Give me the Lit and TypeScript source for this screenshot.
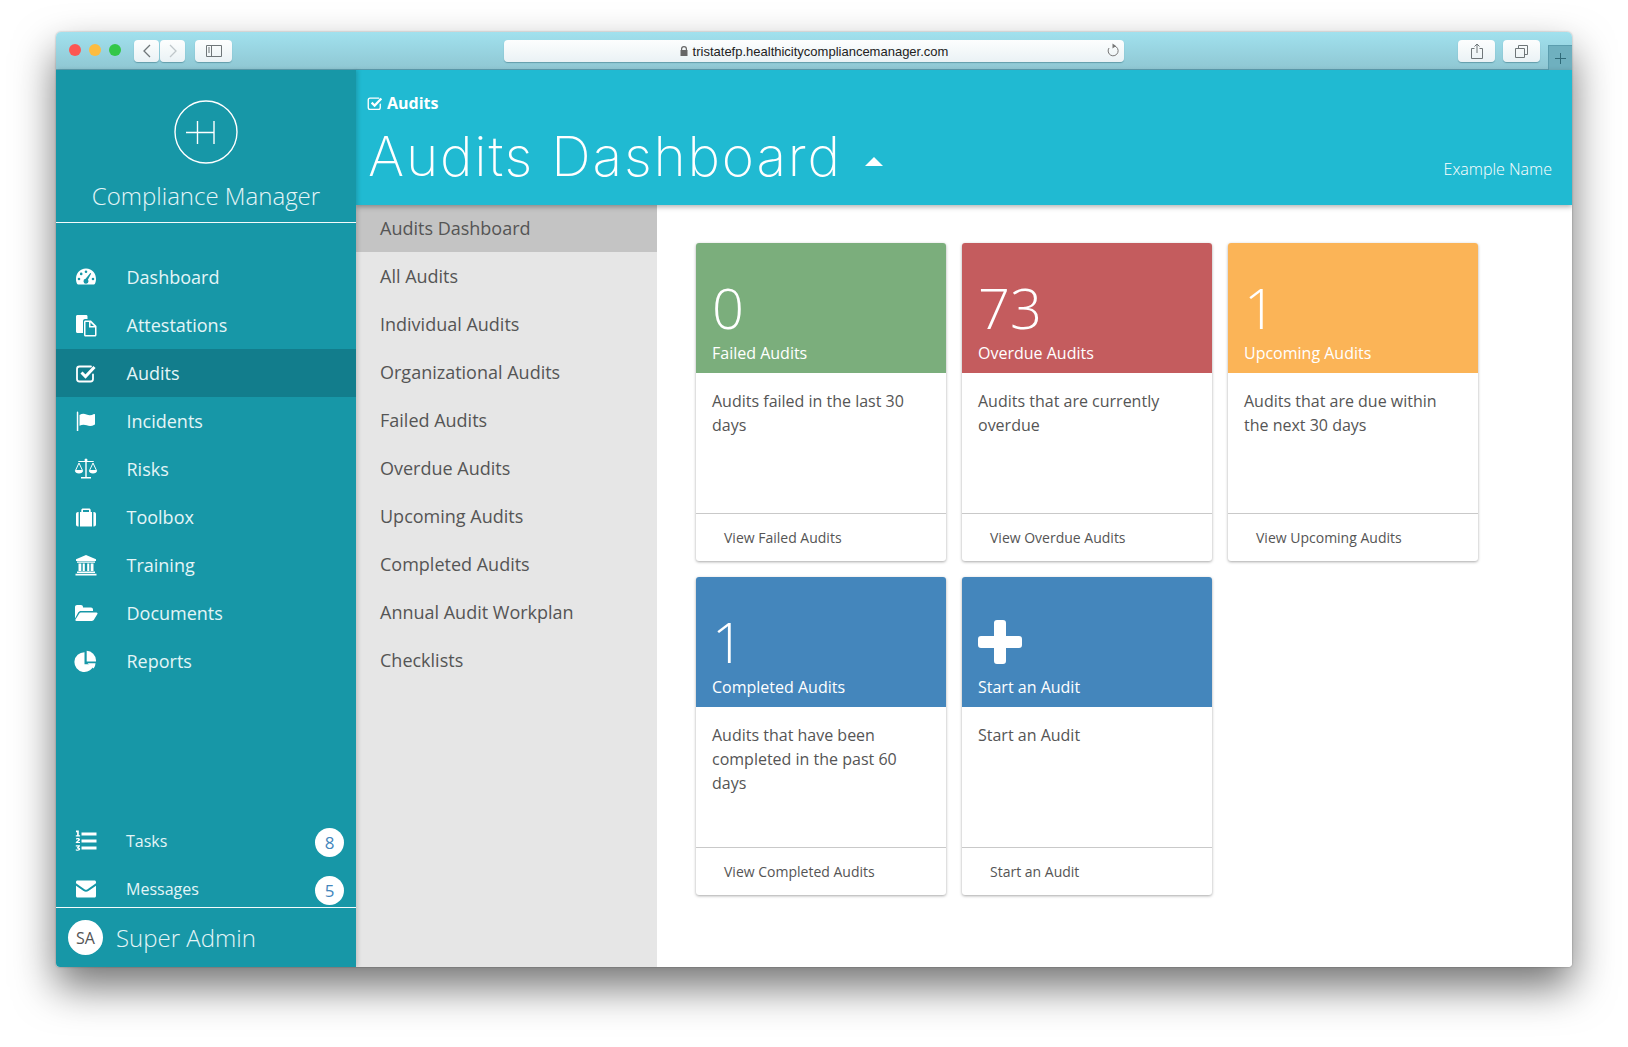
import { LitElement, html, svg, css } from "lit";
import { customElement } from "lit/decorators.js";

const icons: Record<string, unknown> = {
  dashboard: svg`<path fill-rule="evenodd" d="M12 3.500C5.600 3.500 2 8.600 2 14c0 2 .5 3.600 1.200 5c.2.300.5.500.9.500h15.800c.4 0 .7-.2.9-.5c.7-1.400 1.200-3 1.200-5c0-5.400-3.600-10.500-10-10.500zM12 5.500a1.300 1.300 0 1 1 0 2.600a1.300 1.300 0 0 1 0-2.600zM7.200 7.600a1.300 1.300 0 1 1 0 2.600a1.300 1.300 0 0 1 0-2.600zM16.300 8l.9.500l-3.300 6.300c.4.500.6 1 .6 1.500a2.500 2.500 0 1 1-2.900-2.500zM5 12.700a1.300 1.300 0 1 1 0 2.600a1.300 1.300 0 0 1 0-2.600zM19 12.700a1.300 1.300 0 1 1 0 2.600a1.300 1.300 0 0 1 0-2.600z"/>`,
  attest: svg`<path d="M3.500 2h8.500c1 0 1.500.5 1.500 1.500V6H11c-1 0-2 .8-2 2v12H3.500C2.600 20 2 19.400 2 18.500v-15C2 2.600 2.600 2 3.500 2z"/><path fill-rule="evenodd" d="M11.500 7.500h5.500l5.500 5.500v9c0 .8-.6 1.500-1.500 1.500h-9.500c-.9 0-1.500-.7-1.500-1.500V9c0-.9.6-1.500 1.500-1.500zM11.500 9v13h9.500v-7.500h-6V9zM16.500 9.500v3.500h3.500z"/>`,
  check: svg`<path fill="none" stroke="currentColor" stroke-width="1.800" stroke-linecap="round" d="M19 13.500V18c0 1.500-1 2.500-2.500 2.500h-11C4 20.500 3 19.500 3 18V8c0-1.500 1-2.500 2.500-2.500h11.500"/><path fill="none" stroke="currentColor" stroke-width="3" d="M7.500 11.500l4 4l9-9.500"/>`,
  flag: svg`<path d="M3.200 2.500a1.100 1.100 0 0 1 1.100 1.100V22H2.800V3.600a1.100 1.100 0 0 1 .4-1.100z"/><path d="M5.500 6c2.500-1.600 4.700-1.500 7-.5c2.500 1 4.800 1 7.500-.5c.6-.3 1 0 1 .6V15c0 .4-.2.600-.5.800c-2.800 1.500-5.300 1.500-7.800.5c-2.500-1-4.600-.9-7.200.5z"/>`,
  scale: svg`<path d="M11.300 2.700h1.400V4h7v1.100h-7V20h4.300v1.500H7V20h4.300V5.100h-7V4h7z"/><circle cx="12" cy="3" r="1.500"/><path fill="none" stroke="currentColor" stroke-width="1" d="M5 6L1.500 13.500h7zM19 6l-3.500 7.500h7z"/><path d="M.8 13.500h8.400c-.2 2-2 3-4.200 3s-4-1-4.200-3zM14.800 13.500h8.400c-.2 2-2 3-4.200 3s-4-1-4.200-3z"/>`,
  suitcase: svg`<path fill-rule="evenodd" d="M9 3.500h6c1 0 1.700.7 1.700 1.700V7H18v14.500H6V7h1.300V5.200C7.300 4.200 8 3.500 9 3.500zM9 5v2h6V5z"/><path d="M4.600 7v14.500h-.6C2.900 21.500 2 20.600 2 19.500V9c0-1.100.9-2 2-2zM19.400 7h.6c1.100 0 2 .9 2 2v10.500c0 1.100-.9 2-2 2h-.6z"/>`,
  bank: svg`<path d="M12 2l10 4.300V8H2V6.300z"/><path d="M3 8.500h18v1.300H3zM4.500 10.500h2.800v7.500H4.500zM8.700 10.500h2.100v7.500H8.700zM13.200 10.500h2.100v7.500h-2.100zM16.700 10.500h2.800v7.500h-2.800zM3 18.500h18v1.500H3zM1.500 20.700h21v1.800h-21z"/>`,
  folder: svg`<path d="M1 17.500V6c0-1.100.9-2 2-2h4c1.100 0 2 .9 2 2v.5h8c1.100 0 2 .9 2 2V10H7c-1.300 0-2.200.5-2.800 1.600z"/><path d="M7 11.500h15.500c.9 0 1.300.8.9 1.500l-3.500 5.800c-.4.700-1.100 1.200-2 1.200H2.400c-.9 0-1.300-.8-.9-1.500l3.600-5.800c.4-.8 1-1.200 1.900-1.200z"/>`,
  pie: svg`<path d="M10.500 3.200A9.900 9.900 0 1 0 20 15.200h-9.500z"/><path d="M12.700 1.800A9.900 9.900 0 0 1 22 11.300v1.200h-9.300z"/><path d="M13.500 14.200H21.500a9.500 9.500 0 0 1-1.900 5.400z"/>`,
  list: svg`<path d="M7.500 3.500h15v3h-15zM7.500 10.500h15v3h-15zM7.500 17.500h15v3h-15z"/><path d="M2 1.500h2.800v4.800h1.300v1.200H1.800V6.300h1.300V3l-1.100.4zM1.800 14v-1c2-1.500 2.500-2 2.500-2.400c0-.7-1.400-.5-2.300 0v-1.200c2-.7 4-.4 4 1.200c0 1-1 1.800-2 2.300h2V14zM1.800 16.200h4.200v1l-1.400 1.200c1 .2 1.600.8 1.600 1.700c0 1.800-2.600 2.100-4.400 1.300v-1.200c1.300.6 2.700.6 2.700-.2c0-.5-.6-.7-1.600-.6v-1l1.200-1H1.800z"/>`,
  mail: svg`<path d="M3.500 3.500h17C21.400 3.500 22 4.100 22 5v1.300l-8.500 5.900c-1 .7-2 .7-3 0L2 6.300V5c0-.9.6-1.500 1.500-1.500z"/><path d="M2 8.700l7.600 5.200c1.500 1 3.300 1 4.800 0L22 8.700V19c0 .9-.6 1.500-1.500 1.500h-17C2.600 20.500 2 19.900 2 19z"/>`,
};

const icon = (name: string, size = 24) =>
  html`<svg width=${size} height=${size} viewBox="0 0 24 24" fill="currentColor">${icons[name]}</svg>`;

const navItems = [
  ["dashboard", "Dashboard"],
  ["attest", "Attestations"],
  ["check", "Audits"],
  ["flag", "Incidents"],
  ["scale", "Risks"],
  ["suitcase", "Toolbox"],
  ["bank", "Training"],
  ["folder", "Documents"],
  ["pie", "Reports"],
];

const subItems = [
  "Audits Dashboard",
  "All Audits",
  "Individual Audits",
  "Organizational Audits",
  "Failed Audits",
  "Overdue Audits",
  "Upcoming Audits",
  "Completed Audits",
  "Annual Audit Workplan",
  "Checklists",
];

const cards = [
  { value: "0", label: "Failed Audits", color: "#7bae7c", text: "Audits failed in the last 30 days", link: "View Failed Audits" },
  { value: "73", label: "Overdue Audits", color: "#c45c5e", text: "Audits that are currently overdue", link: "View Overdue Audits" },
  { value: "1", label: "Upcoming Audits", color: "#fbb457", text: "Audits that are due within the next 30 days", link: "View Upcoming Audits" },
  { value: "1", label: "Completed Audits", color: "#4486bc", text: "Audits that have been completed in the past 60 days", link: "View Completed Audits" },
  { value: "+", label: "Start an Audit", color: "#4486bc", text: "Start an Audit", link: "Start an Audit" },
];

@customElement("app-root")
export class AppRoot extends LitElement {
  static styles = css`
    :host {
      display: block;
      width: 1628px;
      height: 1047px;
      box-sizing: border-box;
      padding: 32px 56px 80px;
      background: #fff;
      font-family: "Open Sans", sans-serif;
      overflow: hidden;
    }
    .window {
      height: 935px;
      width: 1516px;
      display: flex;
      flex-direction: column;
      border-radius: 5px 5px 4px 4px;
      overflow: hidden;
      box-shadow: 0 20px 42px rgba(0, 0, 0, 0.55), 0 0 2px rgba(0, 0, 0, 0.35);
    }
    .chrome {
      height: 38px;
      flex: none;
      box-sizing: border-box;
      display: flex;
      align-items: flex-start;
      padding: 8px 0 0 13px;
      background: linear-gradient(#a1e1ee, #8fc7d3);
      border-bottom: 1px solid #5f9fb0;
      position: relative;
    }
    .dot {
      width: 12px;
      height: 12px;
      border-radius: 50%;
      margin: 4px 8px 0 0;
    }
    .btn {
      height: 22px;
      background: linear-gradient(#fdfefe, #eaf2f5);
      border-radius: 4px;
      box-shadow: 0 1px 1px rgba(40, 100, 115, 0.45);
      display: flex;
      align-items: center;
      justify-content: center;
      color: #6f7679;
    }
    .back { width: 25px; margin-left: 5px; }
    .fwd { width: 25px; margin-left: 1px; color: #bfc7ca; }
    .side { width: 37px; margin-left: 10px; }
    .url {
      width: 620px;
      margin-left: 272px;
      box-sizing: border-box;
      position: relative;
      gap: 5px;
      font: 13px "Liberation Sans", sans-serif;
      color: #222;
    }
    .reload { position: absolute; right: 4px; top: 3px; }
    .share { width: 37px; margin-left: 334px; }
    .tabs { width: 37px; margin-left: 8px; }
    .plus {
      width: 24px;
      height: 25px;
      margin-left: 8px;
      margin-top: 5px;
      box-sizing: border-box;
      background: #6fb0bf;
      border: 1px solid #5b9dae;
      border-right: 0;
      border-bottom: 0;
      display: flex;
      align-items: center;
      justify-content: center;
      color: #2f6a78;
    }
    .app {
      flex: 1;
      min-height: 0;
      display: flex;
      background: #fff;
    }
    .sidebar {
      width: 300px;
      flex: none;
      display: flex;
      flex-direction: column;
      background: #1797a7;
      color: #e4f5f7;
      box-shadow: 2px 0 4px rgba(0, 0, 0, 0.15);
      position: relative;
      z-index: 2;
    }
    .brand {
      height: 153px;
      flex: none;
      box-sizing: border-box;
      border-bottom: 1px solid #f4fbfc;
      display: flex;
      flex-direction: column;
      align-items: center;
      padding-top: 30px;
    }
    .brand-name {
      margin-top: 15px;
      font-size: 24px;
      font-weight: 300;
      line-height: 34px;
    }
    nav { margin-top: 30px; }
    .nav-item {
      height: 48px;
      display: flex;
      align-items: center;
      font-size: 18px;
    }
    .nav-item.active { background: #127d8c; }
    .nav-icon {
      width: 70px;
      flex: none;
      display: flex;
      justify-content: center;
      padding-right: 10px;
      box-sizing: border-box;
      color: #fff;
    }
    .nav-item .nav-icon { width: 70.5px; }
    .nav-icon svg { display: block; }
    .bottom { margin-top: auto; }
    .task {
      height: 48px;
      box-sizing: border-box;
      padding-top: 12px;
      display: flex;
      align-items: center;
      font-size: 16px;
    }
    .badge {
      margin-left: auto;
      margin-right: 12px;
      margin-top: 2px;
      width: 29px;
      height: 29px;
      border-radius: 50%;
      background: #fff;
      color: #4486bc;
      font-size: 17px;
      font-weight: 400;
      display: flex;
      align-items: center;
      justify-content: center;
    }
    .user {
      height: 60px;
      box-sizing: border-box;
      border-top: 1px solid #f4fbfc;
      display: flex;
      align-items: center;
      padding: 0 0 0 12px;
      gap: 13px;
      font-size: 24px;
      font-weight: 300;
    }
    .avatar {
      width: 35px;
      height: 35px;
      border-radius: 50%;
      background: #fff;
      color: #555;
      font-size: 16px;
      font-weight: 400;
      display: flex;
      align-items: center;
      justify-content: center;
    }
    .main {
      flex: 1;
      display: flex;
      flex-direction: column;
      min-width: 0;
    }
    header {
      height: 135px;
      flex: none;
      box-sizing: border-box;
      background: #20bad2;
      color: #fff;
      box-shadow: 0 2px 5px rgba(0, 0, 0, 0.3);
      position: relative;
      z-index: 1;
      padding: 22px 20px 0 12px;
    }
    .crumb {
      display: flex;
      align-items: center;
      gap: 3px;
      font-size: 16px;
      font-weight: 700;
      line-height: 22px;
    }
    .crumb svg { margin-left: -2px; }
    .title-row {
      display: flex;
      align-items: center;
      margin-top: 8px;
    }
    h1 {
      margin: 0;
      font-family: Inter, sans-serif;
      font-size: 55px;
      line-height: 68px;
      font-weight: 200;
      letter-spacing: 1.8px;
    }
    .caret {
      width: 0;
      height: 0;
      margin: 10px 0 0 23px;
      border-left: 9px solid transparent;
      border-right: 9px solid transparent;
      border-bottom: 9px solid #fff;
    }
    .who {
      margin-left: auto;
      margin-top: 25px;
      font-size: 16px;
      font-weight: 300;
    }
    .under {
      flex: 1;
      display: flex;
      min-height: 0;
    }
    .submenu {
      width: 301px;
      flex: none;
      background: #e6e6e6;
    }
    .sub-item {
      height: 48px;
      box-sizing: border-box;
      padding-left: 24px;
      display: flex;
      align-items: center;
      font-size: 18px;
      color: #555;
    }
    .sub-item.active {
      height: 47px;
      padding-bottom: 1px;
      background: #c4c4c4;
    }
    .content {
      flex: 1;
      padding: 38px 0 0 39px;
      display: grid;
      grid-template-columns: repeat(3, 250px);
      grid-auto-rows: 318px;
      column-gap: 16px;
      row-gap: 16px;
      align-content: start;
    }
    .card {
      display: flex;
      flex-direction: column;
      border-radius: 3px;
      overflow: hidden;
      background: #fff;
      box-shadow: 0 1px 3px rgba(0, 0, 0, 0.35);
    }
    .card-head {
      height: 130px;
      flex: none;
      box-sizing: border-box;
      padding: 26px 16px 0;
      color: #fff;
    }
    .value {
      display: flex;
      align-items: flex-start;
      font-size: 56px;
      font-weight: 300;
      line-height: 76px;
      height: 76px;
    }
    .plus-big { display: block; margin-top: 17px; }
    .label {
      font-size: 16px;
      line-height: 22px;
      margin-top: -3px;
    }
    .card-body {
      flex: 1;
      padding: 16px 16px 0;
      font-size: 16px;
      line-height: 24px;
      color: #555;
    }
    .card-foot {
      height: 48px;
      flex: none;
      box-sizing: border-box;
      border-top: 1px solid #c9c9c9;
      padding-left: 28px;
      display: flex;
      align-items: center;
      font-size: 14px;
      color: #555;
    }
  `;

  private chrome() {
    return html`<div class="chrome">
      <div class="dot" style="background:#fc5753"></div>
      <div class="dot" style="background:#fdbc40"></div>
      <div class="dot" style="background:#33c748"></div>
      <div class="btn back">
        <svg width="10" height="14" viewBox="0 0 10 14" fill="none" stroke="currentColor" stroke-width="1.3"><path d="M8 1L2 7l6 6" /></svg>
      </div>
      <div class="btn fwd">
        <svg width="10" height="14" viewBox="0 0 10 14" fill="none" stroke="currentColor" stroke-width="1.3"><path d="M2 1l6 6l-6 6" /></svg>
      </div>
      <div class="btn side">
        <svg width="16" height="12" viewBox="0 0 16 12" fill="none" stroke="currentColor"><path d="M.5.500h15v11H.5zM5.500.500v11M2 3h2M2 5h2M2 7h2" /></svg>
      </div>
      <div class="btn url">
        <svg width="8" height="10" viewBox="0 0 8 10" fill="#666"><path d="M1 4V3a3 3 0 0 1 6 0v1h.5v6H.5V4zM2.200 4h3.600V3a1.800 1.800 0 0 0-3.600 0z" /></svg>
        <span>tristatefp.healthicitycompliancemanager.com</span>
        <svg class="reload" width="14" height="15" viewBox="0 0 14 15" fill="none" stroke="#777"><path d="M8.500 3A5 5 0 1 1 3 5" /><path d="M6.500 .500L10 3L6.500 5.500z" fill="#777" stroke="none" /></svg>
      </div>
      <div class="btn share">
        <svg width="12" height="16" viewBox="0 0 12 16" fill="none" stroke="currentColor"><path d="M3.500 5.500H.5v10h11v-10h-3M6 10V1M3.500 3.500L6 1l2.500 2.500" /></svg>
      </div>
      <div class="btn tabs">
        <svg width="13" height="13" viewBox="0 0 13 13" fill="none" stroke="currentColor"><path d="M.5 3.500h9v9h-9zM3.500 3.500v-3h9v9h-3" /></svg>
      </div>
      <div class="plus">
        <svg width="11" height="11" viewBox="0 0 11 11" stroke="currentColor"><path d="M5.500 0v11M0 5.500h11" /></svg>
      </div>
    </div>`;
  }

  private sidebar() {
    return html`<aside class="sidebar">
      <div class="brand">
        <svg width="64" height="64" viewBox="0 0 64 64" fill="none" stroke="#fff" stroke-width="1.400">
          <circle cx="32" cy="32" r="31" />
          <path d="M12 32.500H40M23.500 21v23M40 21v23" />
        </svg>
        <div class="brand-name">Compliance Manager</div>
      </div>
      <nav>
        ${navItems.map(
          ([ic, label]) => html`<div class="nav-item ${label === "Audits" ? "active" : ""}">
            <span class="nav-icon">${icon(ic)}</span>${label}
          </div>`
        )}
      </nav>
      <div class="bottom">
        <div class="task"><span class="nav-icon">${icon("list")}</span>Tasks<span class="badge">8</span></div>
        <div class="task"><span class="nav-icon">${icon("mail")}</span>Messages<span class="badge">5</span></div>
        <div class="user"><span class="avatar">SA</span>Super Admin</div>
      </div>
    </aside>`;
  }

  render() {
    return html`<div class="window">
      ${this.chrome()}
      <div class="app">
        ${this.sidebar()}
        <div class="main">
          <header>
            <div class="crumb">${icon("check", 18)}Audits</div>
            <div class="title-row">
              <h1>Audits Dashboard</h1>
              <span class="caret"></span>
              <span class="who">Example Name</span>
            </div>
          </header>
          <div class="under">
            <div class="submenu">
              ${subItems.map(
                (s, i) => html`<div class="sub-item ${i === 0 ? "active" : ""}">${s}</div>`
              )}
            </div>
            <div class="content">
              ${cards.map(
                (c) => html`<div class="card">
                  <div class="card-head" style="background:${c.color}">
                    <div class="value">
                      ${c.value === "+"
                        ? html`<svg class="plus-big" width="44" height="44" viewBox="0 0 44 44" fill="#fff"><path d="M16 3a3 3 0 0 1 3-3h6a3 3 0 0 1 3 3v13h13a3 3 0 0 1 3 3v6a3 3 0 0 1-3 3H28v13a3 3 0 0 1-3 3h-6a3 3 0 0 1-3-3V28H3a3 3 0 0 1-3-3v-6a3 3 0 0 1 3-3h13z" /></svg>`
                        : c.value}
                    </div>
                    <div class="label">${c.label}</div>
                  </div>
                  <div class="card-body">${c.text}</div>
                  <div class="card-foot">${c.link}</div>
                </div>`
              )}
            </div>
          </div>
        </div>
      </div>
    </div>`;
  }
}
